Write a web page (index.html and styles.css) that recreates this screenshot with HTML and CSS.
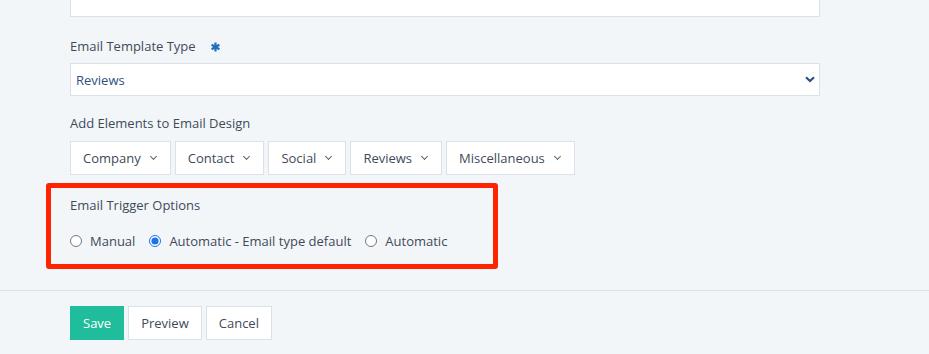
FILE: index.html
```html
<!DOCTYPE html>
<html lang="en">

<head>
    <meta charset="UTF-8">
    <meta name="viewport" content="width=device-width, initial-scale=1.0">
    <title>Email Template</title>
    <link rel="stylesheet" href="styles.css">
</head>

<body>
    <div class="form">
        <div class="input-box"></div>

        <div class="form-group">
            <label class="label">Email Template Type
                <svg class="required" width="9" height="10" viewBox="0 0 9 10">
                    <path d="M4.5 0.5v9M0.6 2.75l7.8 4.5M0.6 7.25l7.8-4.5" stroke="#1f6fbf" stroke-width="2.2" />
                </svg>
            </label>
            <div class="select">
                <span>Reviews</span>
                <svg width="10" height="7" viewBox="0 0 10 7">
                    <path d="M1 1.2l4 3.8 4-3.8" fill="none" stroke="#2b5283" stroke-width="2.2" />
                </svg>
            </div>
        </div>

        <div class="form-group elements-group">
            <label class="label">Add Elements to Email Design</label>
            <div class="elements">
                <button class="btn drop">Company <i class="caret"></i></button>
                <button class="btn drop">Contact <i class="caret"></i></button>
                <button class="btn drop">Social <i class="caret"></i></button>
                <button class="btn drop">Reviews <i class="caret"></i></button>
                <button class="btn drop">Miscellaneous <i class="caret"></i></button>
            </div>
        </div>

        <div class="trigger">
            <label class="label">Email Trigger Options</label>
            <div class="radios">
                <label class="radio"><input type="radio" name="trigger"> Manual</label>
                <label class="radio"><input type="radio" name="trigger" checked> Automatic - Email type default</label>
                <label class="radio"><input type="radio" name="trigger"> Automatic</label>
            </div>
        </div>
    </div>

    <div class="actions">
        <button class="btn save">Save</button>
        <button class="btn">Preview</button>
        <button class="btn">Cancel</button>
    </div>
</body>

</html>
```

FILE: styles.css
```css
body {
    margin: 0;
    font-family: 'Open Sans', 'Noto Sans', sans-serif;
    font-size: 13px;
    color: #3f4a59;
    background-color: #f3f6f9;
    overflow: hidden;
}

.form {
    width: 750px;
    padding-left: 70px;
}

.input-box {
    height: 32px;
    margin-top: -17px;
    width: 748px;
    background-color: #fff;
    border: 1px solid #dbe1e8;
}

.form-group {
    margin-top: 20px;
}

.label {
    display: block;
    line-height: 18px;
    margin-bottom: 8px;
}

.required {
    margin-left: 12px;
    vertical-align: -1px;
}

.select {
    height: 31px;
    background-color: #fff;
    border: 1px solid #dbe1e8;
    display: flex;
    align-items: center;
    justify-content: space-between;
    padding: 0 4px 0 5px;
    color: #2b5283;
}

.elements-group {
    margin-top: 18px;
}

.elements-group .label {
    margin-bottom: 9px;
}

.elements {
    display: flex;
    gap: 4px;
}

.btn {
    font-family: inherit;
    font-size: 13px;
    color: #3f4a59;
    background-color: #fff;
    border: 1px solid #dbe1e8;
    height: 34px;
    padding: 0 12px;
    border-radius: 0;
}

.drop {
    display: flex;
    align-items: center;
    padding: 0 12px 0 12px;
}

.caret {
    display: inline-block;
    width: 4px;
    height: 4px;
    border-right: 1.2px solid #5a6473;
    border-bottom: 1.2px solid #5a6473;
    transform: rotate(45deg);
    margin: -3px 2px 0 10px;
}

.trigger {
    margin: 8px 0 0 -24px;
    width: 423px;
    height: 68px;
    border: 5px solid #ff2400;
    border-radius: 3px;
    padding: 8px 0 0 19px;
    box-sizing: content-box;
}

.trigger .label {
    margin-bottom: 18px;
}

.radios {
    display: flex;
    gap: 14px;
}

.radio {
    display: flex;
    align-items: center;
    line-height: 18px;
}

.radio input {
    margin: 0 8px 0 0;
    width: 12px;
    height: 12px;
    accent-color: #1a73e8;
}

.actions {
    margin-top: 21px;
    border-top: 1px solid #dbe1e8;
    padding: 15px 0 0 70px;
    display: flex;
    gap: 4px;
}

.save {
    background-color: #1fbd9c;
    border-color: #1fbd9c;
    color: #fff;
    padding: 0 12px;
}
```
